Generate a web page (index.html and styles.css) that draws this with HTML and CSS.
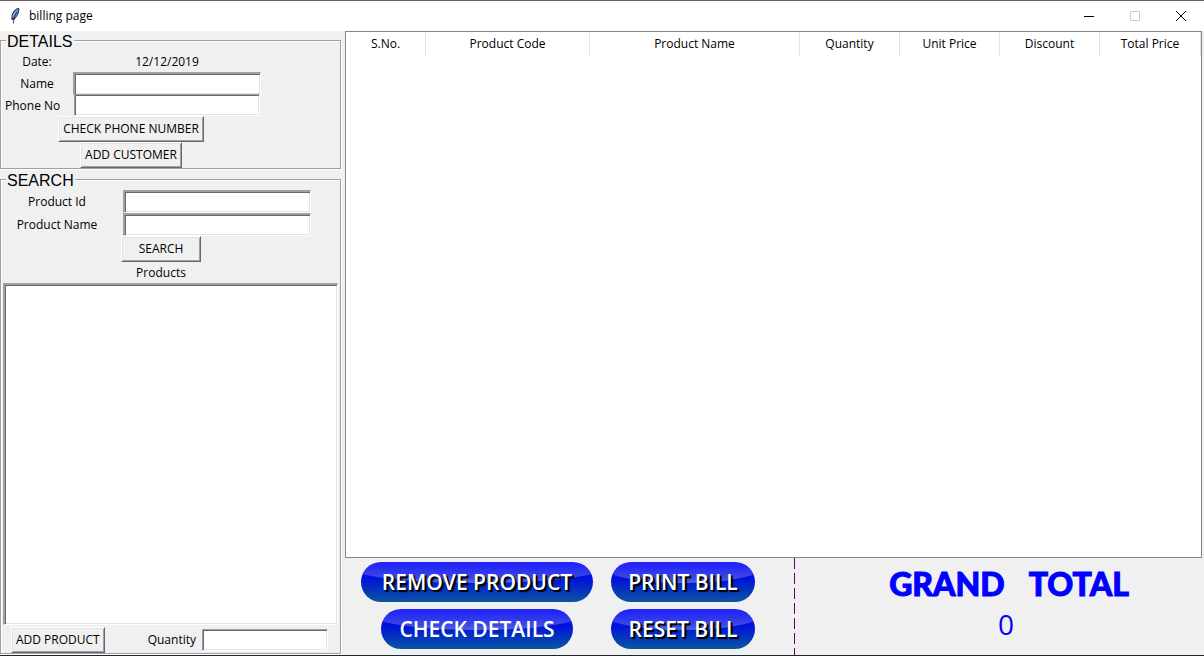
FILE: index.html
```html
<!DOCTYPE html>
<html lang="en">
<head>
<meta charset="utf-8">
<title>billing page</title>
<link rel="stylesheet" href="styles.css">
</head>
<body>
<header class="titlebar">
  <svg class="feather" viewBox="0 0 12 18" aria-hidden="true">
    <path d="M9.500 1C6.500 1.500 3.500 4.500 2.700 8.500L2.300 12.500L4.500 13C8 10.500 10 6.500 10.500 2Z" fill="#17202c"/>
    <path d="M9.300 2C7 2.500 4.500 5.500 3.600 9.500L3.500 11.500L5 11.500C7.500 9.500 9.300 6 9.600 2.500Z" fill="#5c98de"/>
    <path d="M7.500 3.300C5.500 5 4.400 7 3.900 9.500" fill="none" stroke="#a9c8ea"/>
    <path d="M8 5C6 8 4.500 11 4.500 16.500" fill="none" stroke="#111" stroke-width=".8"/>
  </svg>
  <h1 class="title">billing page</h1>
  <div class="window-controls">
    <button class="control" type="button" aria-label="Minimize"><svg viewBox="0 0 12 12"><path d="M1 6.500H11"/></svg></button>
    <button class="control" type="button" aria-label="Maximize" disabled><svg viewBox="0 0 12 12"><path d="M1.500 1.500H10.500V10.500H1.500Z"/></svg></button>
    <button class="control" type="button" aria-label="Close"><svg viewBox="0 0 12 12"><path d="M1 1L11 11M11 1L1 11"/></svg></button>
  </div>
</header>
<main class="window">
  <div class="side">
    <fieldset class="group">
      <legend>DETAILS</legend>
      <div class="form details-form">
        <span>Date:</span><span>12/12/2019</span>
        <label for="name">Name</label><input class="entry deep" id="name" type="text">
        <label class="start" for="phone">Phone No</label><input class="entry" id="phone" type="text">
        <button class="raised wide" type="button">CHECK PHONE NUMBER</button>
        <button class="raised wide" type="button">ADD CUSTOMER</button>
      </div>
    </fieldset>
    <fieldset class="group search">
      <legend>SEARCH</legend>
      <div class="form search-form">
        <label for="pid">Product Id</label><input class="entry deep" id="pid" type="text">
        <label for="pname">Product Name</label><input class="entry deep" id="pname" type="text">
        <button class="raised wide find" type="button">SEARCH</button>
        <label class="wide" for="products">Products</label>
      </div>
      <select class="entry deep list" id="products" size="10"></select>
      <div class="add-row">
        <button class="raised" type="button">ADD PRODUCT</button>
        <label for="qty">Quantity</label><input class="entry" id="qty" type="text">
      </div>
    </fieldset>
  </div>
  <div class="bill">
    <div class="sheet">
      <table>
        <colgroup><col class="c-no"><col class="c-code"><col class="c-name"><col class="c-num"><col class="c-num"><col class="c-num"><col></colgroup>
        <thead><tr><th>S.No.</th><th>Product Code</th><th>Product Name</th><th>Quantity</th><th>Unit Price</th><th>Discount</th><th>Total Price</th></tr></thead>
        <tbody></tbody>
      </table>
    </div>
    <footer class="summary">
      <div class="actions">
        <button class="pill" type="button">REMOVE PRODUCT</button>
        <button class="pill" type="button">PRINT BILL</button>
        <button class="pill inset" type="button">CHECK DETAILS</button>
        <button class="pill" type="button">RESET BILL</button>
      </div>
      <div class="total">
        <h2><span>GRAND</span><span>TOTAL</span></h2>
        <output>0</output>
      </div>
    </footer>
  </div>
</main>
</body>
</html>
```
FILE: styles.css
```css
* { box-sizing: border-box; }

body {
  margin: 0;
  min-height: 100vh;
  display: flex;
  flex-direction: column;
  background: #f0f0f0;
  border-top: 1px solid #6b5f5f;
  border-bottom: 1px solid #1c2733;
  color: #000;
  font: 12px/16px "Open Sans", "Noto Sans", sans-serif;
}

button, input, select { font: inherit; color: inherit; border-radius: 0; }

.titlebar {
  display: flex;
  align-items: center;
  height: 30px;
  padding-left: 9px;
  background: #fff;
}
.feather { width: 12px; height: 18px; }
.title { margin: 0 0 0 8px; font-size: 12px; font-weight: 400; }
.window-controls { display: flex; margin-left: auto; }
.control {
  width: 46px;
  height: 30px;
  padding: 0;
  border: 0;
  background: none;
  display: grid;
  place-items: center;
}
.control svg { width: 12px; height: 12px; fill: none; stroke: #000; stroke-width: 1; }
.control:disabled svg { stroke: #ccc; }

.window { flex: 1; display: flex; }
.side { width: 345px; padding-right: 4px; display: flex; flex-direction: column; }

.group {
  min-width: 0;
  margin: 0 0 1px;
  padding: 0;
  border: 1px solid #a0a0a0;
  box-shadow: 1px 1px #fff, inset 1px 1px #fff;
}
.group legend {
  margin-left: 5px;
  padding: 2px 1px 0;
  background: #f0f0f0;
  font: 16px/17px "Liberation Sans", Arial, sans-serif;
}
.search { flex: 1; display: flex; flex-direction: column; }

.form { display: grid; align-items: center; justify-items: center; }
.details-form { grid-template-columns: 72px 188px; grid-template-rows: 22px 22px 22px 26px 26px; justify-content: start; }
.details-form span, .details-form label { padding-top: 2px; }
.search-form { padding-top: 1px; grid-template-columns: 112px 208px; grid-template-rows: 23px 23px 26px 21px; justify-content: start; }
.details-form .start { justify-self: start; padding-left: 4px; }
.wide { grid-column: 1 / -1; }
.find { width: 80px; }

.entry {
  width: 186px;
  height: 22px;
  margin: 0;
  padding: 0 4px;
  border: 1px solid;
  border-color: #a0a0a0 #fff #fff #a0a0a0;
  background: #fff;
  box-shadow: inset 1px 1px #696969, inset -1px -1px #e3e3e3;
  outline: 0;
}
.deep { width: 188px; height: 23px; border-top-width: 2px; border-left-width: 2px; }

.raised {
  height: 26px;
  padding: 0 4px;
  border: 1px solid;
  border-color: #fff #696969 #696969 #fff;
  background: #f0f0f0;
  box-shadow: inset 1px 1px #e3e3e3, inset -1px -1px #a0a0a0;
  white-space: nowrap;
}

.list { flex: 1; width: auto; min-height: 120px; margin: 0 2px 0 2px; }
.add-row { display: flex; align-items: center; height: 28px; padding: 2px 12px 0 10px; }
.add-row label { margin-left: auto; padding-right: 6px; }
.add-row .entry { width: 126px; }

.bill { flex: 1; min-width: 0; display: flex; flex-direction: column; }
.sheet { flex: 1; margin-right: 2px; border: 1px solid #828790; background: #fff; }
table { width: 100%; table-layout: fixed; border-collapse: separate; border-spacing: 0; }
th { height: 24px; padding: 0; border-right: 1px solid #e5e5e5; font-weight: 400; }
.c-no { width: 80px; }
.c-code { width: 164px; }
.c-name { width: 210px; }
.c-num { width: 100px; }

.summary { display: flex; height: 97px; }
.actions {
  width: 449px;
  padding: 4px 0 0 16px;
  display: grid;
  grid-template-columns: 232px 144px;
  column-gap: 18px;
  row-gap: 7px;
  grid-auto-rows: 40px;
}
.pill {
  position: relative;
  isolation: isolate;
  overflow: hidden;
  padding: 0;
  border: 0;
  border-radius: 20px;
  background: linear-gradient(#2222ff, #0010dc 40%, #0a56a0);
  color: #fff;
  font: 600 21px/38px "Open Sans", "Noto Sans", sans-serif;
  text-shadow: 1px 1px 1px #000, 2px 2px 1px #000;
  white-space: nowrap;
}
.pill::before {
  content: "";
  position: absolute;
  z-index: -1;
  top: -19px;
  left: -10%;
  right: -10%;
  height: 40px;
  border-radius: 50%;
  background: linear-gradient(transparent 50%, rgba(255, 255, 255, .32));
}
.inset { margin: 0 20px; text-shadow: none; }
.total {
  flex: 1;
  display: flex;
  flex-direction: column;
  align-items: center;
  padding: 6px 0 0 20px;
  background: repeating-linear-gradient(#606 0 11px, transparent 11px 15px) 0 0 / 1px 100% no-repeat;
  color: #00f;
}
.total h2 { display: flex; gap: 24px; margin: 0; font: 900 32px/40px Lato, sans-serif; -webkit-text-stroke: 1px #00f; }
.total output { padding-right: 6px; font-size: 28px; line-height: 40px; }
```
